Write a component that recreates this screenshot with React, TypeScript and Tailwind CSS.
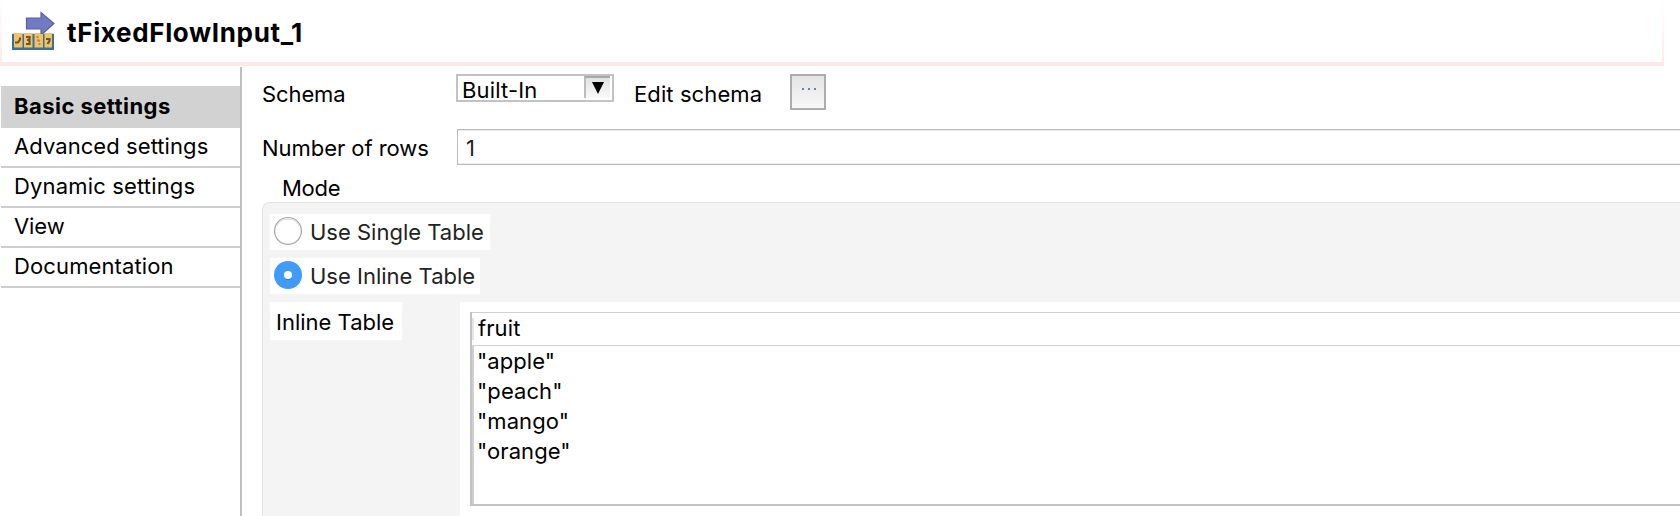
import React from "react";

type Item = { label: string; tracking: string };

const tabs: Item[] = [
  { label: "Advanced settings", tracking: "tracking-[0.07px]" },
  { label: "Dynamic settings", tracking: "tracking-[0.16px]" },
  { label: "View", tracking: "tracking-[-0.1px]" },
  { label: "Documentation", tracking: "tracking-[0.12px]" },
];

const rows: string[] = ['"apple"', '"peach"', '"mango"', '"orange"'];

function ComponentIcon() {
  return (
    <svg width="44" height="40" viewBox="0 0 44 40" className="block shrink-0">
      <rect x="0" y="23" width="42" height="16" fill="#35719b" />
      <rect x="0" y="22" width="42" height="1" fill="#e6dcc0" />
      <g fill="#f3c363">
        <rect x="2" y="22" width="8.5" height="14.5" />
        <rect x="12" y="22" width="8.5" height="14.5" />
        <rect x="22.5" y="22" width="8.5" height="14.5" />
        <rect x="32.5" y="22" width="7.5" height="14.5" />
      </g>
      <g fill="none" stroke="#5d4a2a" strokeWidth="2.2" opacity="0.9">
        <path d="M3 31.5h3l2-3v-2" />
        <path d="M14 26h3.5v3h-2.5M17.5 29v4H14" />
        <path d="M24.5 26h2M25 29l3 1M28.5 33h-2" stroke="#a58850" />
        <path d="M34 28h3.5v2l-2 3" />
      </g>
      <path d="M14.500 7H29V1.500L42 12.500 31 22.500h-2V18H14.500Z" fill="#737ac4" stroke="#5960a4" strokeWidth="1.200" />
    </svg>
  );
}

function Radio({ checked, label }: { checked: boolean; label: string }) {
  return (
    <label className="flex h-9 items-start gap-2 bg-white pl-1 text-[#222]">
      <svg width="28" height="28" viewBox="0 0 28 28" className="mt-[3px] block shrink-0">
        {checked ? (
          <>
            <circle cx="14" cy="14" r="14" fill="#409bfa" />
            <circle cx="14" cy="15" r="4.200" fill="#2f7fd6" />
            <circle cx="14" cy="14" r="4.100" fill="#fff" />
          </>
        ) : (
          <>
            <circle cx="14" cy="14" r="13.400" fill="#fff" stroke="#a8a8a8" strokeWidth="1.200" />
            <path d="M3 8.500A12.300 12.300 0 0 1 25 8.500" fill="none" stroke="#e0e0e0" strokeWidth="1.500" />
          </>
        )}
      </svg>
      <span className="mt-1.5">{label}</span>
    </label>
  );
}

export default function App() {
  return (
    <div className="flex h-[516px] w-[1680px] flex-col overflow-hidden bg-white font-['Inter',sans-serif] text-[22px] leading-6 whitespace-nowrap text-black">
      <header className="flex h-[66px] w-[1664px] shrink-0 bg-linear-to-b from-white to-[#ffe8e8] px-0.5">
        <div className="flex h-[62px] flex-1 bg-white pt-[11px] pl-2.5 shadow-[0_4px_0_#ffe8e8]">
          <ComponentIcon />
          <h1 className="ml-[11px] pt-2.5 text-[26px] font-bold tracking-[0.65px]">tFixedFlowInput_1</h1>
        </div>
      </header>

      <div className="flex min-h-0 flex-1">
        <nav className="mt-px flex w-[242px] shrink-0 flex-col border-r-2 border-[#bfbfbf] pt-[19px] pl-px">
          <div className="h-[42px] bg-[#d2d2d2] pt-2 pl-[13px] font-bold tracking-[0.45px]">Basic settings</div>
          {tabs.map((t) => (
            <div key={t.label} className={`h-10 border-b-2 border-[#cecece] pt-1.5 pl-[13px] ${t.tracking}`}>
              {t.label}
            </div>
          ))}
        </nav>

        <main className="flex min-w-0 flex-1 flex-col pl-5">
          <div className="flex h-[63px] shrink-0 items-start pt-2">
            <span className="mt-2 w-[194px] tracking-[-0.1px]">Schema</span>
            <div className="flex h-7 w-[158px] justify-between border-2 border-[#c2c2c2] pr-0.5 pl-1">
              <span className="mt-0.5 tracking-[0.15px]">Built-In</span>
              <span className="h-[22px] w-[26px] border-t-2 border-l-2 border-t-[#a8a8a8] border-l-[#bcbcbc] bg-linear-to-b from-[#e2e2e2] to-[#fafafa]">
                <svg width="24" height="20" viewBox="0 0 24 20" className="block">
                  <path d="M6 4h12l-6 12Z" />
                </svg>
              </span>
            </div>
            <span className="mt-2 ml-5 w-[156px] tracking-[0.1px]">Edit schema</span>
            <button className="h-9 w-9 border-2 border-[#adadad] bg-linear-to-b from-[#e4e4e4] to-[#f8f8f8]">
              <svg width="32" height="32" viewBox="0 0 32 32" className="block" fill="#7183a5">
                <path d="M10 12h2v2h-2zM16 12h2v2h-2zM22 12h2v2h-2z" />
              </svg>
            </button>
          </div>

          <div className="flex h-9 shrink-0">
            <span className="mt-[7px] w-[195px] tracking-[-0.05px]">Number of rows</span>
            <div className="flex-1 border-y border-l border-[#bcbcbc] pt-1.5 pl-2 text-[#222] shadow-[inset_0_1px_0_#ececec,inset_0_-1px_0_#ececec]">1</div>
          </div>

          <div className="h-[37px] shrink-0 pt-[11px] pl-5 tracking-[-0.25px]">Mode</div>

          <section className="flex flex-1 flex-col rounded-tl-lg border-t border-l border-[#e4e4e4] bg-[#f4f4f4] pt-[11px] pl-[7px]">
            <div className="flex w-[220px] flex-col">
              <Radio checked={false} label="Use Single Table" />
            </div>
            <div className="mt-2 flex w-[210px] flex-col">
              <Radio checked label="Use Inline Table" />
            </div>
            <div className="mt-2 flex flex-1 items-start">
              <div className="mr-[58px] h-[38px] w-[132px] shrink-0 bg-white pt-2 pl-1.5">Inline Table</div>
              <div className="flex-1 self-stretch bg-white pt-2.5 pl-2.5">
                <div className="flex h-[194px] flex-col border-b-2 border-l-2 border-[#c2c2c2]">
                  <div className="flex h-[34px] items-start border-y border-[#d0d0d0]">
                    <span className="mt-[5px] h-[22px] w-0.5 bg-[#e6e6e6]" />
                    <span className="mt-[3px] ml-1 tracking-[0.1px]">fruit</span>
                  </div>
                  <div className="flex-1 border-l-2 border-[#cfcfcf] pl-[3px] leading-[30px] tracking-[0.08px]">
                    {rows.map((r) => (
                      <div key={r} className="h-[30px]">
                        {r}
                      </div>
                    ))}
                  </div>
                </div>
              </div>
            </div>
          </section>
        </main>
      </div>
    </div>
  );
}
